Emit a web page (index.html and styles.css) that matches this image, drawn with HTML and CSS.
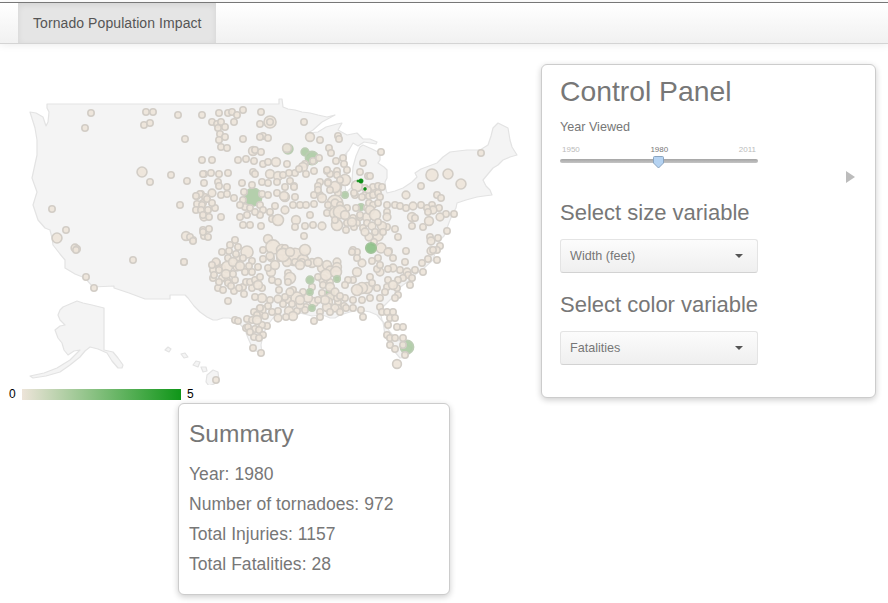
FILE: index.html
```html
<!DOCTYPE html>
<html lang="en">
<head>
<meta charset="utf-8">
<title>Tornado Population Impact</title>
<link rel="stylesheet" href="styles.css">
</head>
<body>
<nav class="navbar">
  <a class="tab">Tornado Population Impact</a>
</nav>
<main class="main">
  <section class="left">
    <svg class="map" viewBox="0 44 530 341" width="530" height="341" aria-label="US map of tornadoes">
      <g class="land">
        <path d="M47 104L279 104L279 99L282 99L283 107L288 109L295 110L302 112L310 113L318 115L327 117L335 115L322 122L313 130L308 133L318 132L326 127L337 124L342 123L338 130L347 135L357 133L363 139L370 139L377 142L376 144L364 142L358 146L353 143L349 150L343 157L347 152L345 165L344 176L346 193L352 187L352 180L353 167L356 156L360 147L363 145L372 149L380 153L380 160L378 163L384 167L387 170L387 178L385 182L386 190L387 193L395 191L403 188L412 182L417 177L415 173L421 169L437 163L443 157L450 152L458 151L467 150L480 150L488 145L491 136L493 128L498 123L508 128L510 140L512 147L517 155L510 157L503 160L498 165L493 168L488 174L483 180L486 186L490 190L492 195L484 196L477 197L466 200L457 203L456 208L453 213L450 220L447 228L444 236L440 240L436 250L433 260L424 268L416 274L410 280L403 285L397 290L392 298L386 304L380 310L382 320L390 332L397 340L405 343L412 348L410 353L407 357L400 358L395 352L390 344L385 337L384 328L383 322L377 315L370 312L360 310L350 312L340 315L335 318L330 318L323 315L312 316L300 313L288 314L278 316L273 318L267 326L263 335L261 345L262 353L256 351L252 347L248 338L245 330L240 324L235 320L229 318L223 318L217 320L213 320L207 317L200 312L194 306L188 298L185 295L170 295L170 299L145 299L129 293L114 288L114 286L93 287L85 278L75 274L65 268L65 260L60 254L53 245L52 238L50 230L45 228L38 220L33 205L37 192L32 178L37 155L37 140L35 128L30 112L36 113L43 117L46 126L48 122L49 112L47 108Z"/>
        <path d="M77 301L83 303L92 305L104 308L104 350L113 352L118 358L123 365L122 368L118 368L112 361L107 353L98 349L90 347L85 351L80 357L70 365L60 372L46 376L33 378L30 376L44 373L57 368L70 360L78 352L80 350L74 351L68 355L64 350L62 343L58 338L55 330L60 326L65 325L60 320L58 315L60 310L63 307Z"/>
        <path d="M207 375L213 370L218 372L219 380L214 384L209 386L206 382Z"/>
        <path d="M196 361L200 362L198 367L193 365Z"/>
        <path d="M201 367L206 367L207 371L203 372Z"/>
        <path d="M181 354L185 353L188 357L184 358Z"/>
        <path d="M165 350L168 347L171 349L169 352Z"/>
      </g>
      <g id="bubbles"></g>
    </svg>
    <div class="legend">
      <span class="legend-num">0</span>
      <span class="legend-bar"></span>
      <span class="legend-num">5</span>
    </div>
    <section class="card summary">
      <h3 class="summary-title">Summary</h3>
      <p class="stat">Year: 1980</p>
      <p class="stat">Number of tornadoes: 972</p>
      <p class="stat">Total Injuries: 1157</p>
      <p class="stat">Total Fatalities: 28</p>
    </section>
  </section>
  <section class="card panel">
    <h2 class="panel-title">Control Panel</h2>
    <div class="field-label">Year Viewed</div>
    <div class="slider">
      <div class="ticks"><span>1950</span><span class="tick-now">1980</span><span>2011</span></div>
      <div class="track">
        <svg class="thumb" width="13" height="13" viewBox="0 0 13 13"><path d="M1.5 1.5Q1.5 .5 2.5 .5L10.500 .5Q11.500 .5 11.500 1.500L11.500 7L6.500 12L1.500 7Z" fill="#b5d3f2" stroke="#8aa4bf"/></svg>
      </div>
    </div>
    <div class="play-row">
      <svg width="9" height="12" viewBox="0 0 9 12"><path d="M0 0L9 6L0 12Z" fill="#bcbcbc"/></svg>
    </div>
    <h4 class="select-title first">Select size variable</h4>
    <div class="select"><span>Width (feet)</span><i class="caret"></i></div>
    <h4 class="select-title">Select color variable</h4>
    <div class="select"><span>Fatalities</span><i class="caret"></i></div>
  </section>
</main>
<script src="map.js"></script>
</body>
</html>
```
FILE: styles.css
```css
* { box-sizing: border-box; }
html, body { margin: 0; padding: 0; }
body {
  width: 888px;
  height: 603px;
  overflow: hidden;
  background: #fff;
  font-family: "Liberation Sans", Arial, sans-serif;
  color: #777;
}
.navbar {
  height: 42px;
  margin-top: 2px;
  padding-left: 18px;
  display: flex;
  background: linear-gradient(#fff, #f1f1f1);
  border-top: 1px solid #777;
  border-bottom: 1px solid #d4d4d4;
  box-shadow: 0 1px 8px rgba(0, 0, 0, .08);
}
.tab {
  width: 198px;
  padding-left: 15px;
  line-height: 40px;
  font-size: 14px;
  letter-spacing: .08px;
  color: #555;
  background: #e5e5e5;
  box-shadow: inset 0 2px 6px rgba(0, 0, 0, .08);
}
.main { display: flex; align-items: flex-start; }
.left { width: 541px; flex: none; }
.map { display: block; }
.land path {
  fill: #f4f4f4;
  stroke: #e3e3e3;
  stroke-width: 1.2;
  stroke-linejoin: round;
}
.legend {
  display: flex;
  align-items: center;
  height: 12px;
  margin-top: 3px;
  padding-left: 9px;
  font-size: 12px;
  color: #000;
}
.legend-num { width: 7px; }
.legend-bar {
  width: 159px;
  height: 11px;
  margin: 0 6px;
  background: linear-gradient(to right, #ede4d9, #0f9618);
}
.card {
  background: #fff;
  border: 1px solid #ccc;
  border-radius: 6px;
  box-shadow: 0 2px 6px rgba(0, 0, 0, .2);
}
.summary {
  width: 272px;
  height: 192px;
  margin: 3px 0 0 178px;
  padding: 15px 10px 0;
}
.summary-title {
  margin: 0 0 11px;
  font-size: 24.5px;
  font-weight: 400;
  line-height: 29px;
}
.stat {
  margin: 0;
  font-size: 17.5px;
  letter-spacing: .05px;
  line-height: 30px;
}
.panel {
  width: 335px;
  height: 334px;
  margin-top: 20px;
  padding: 9px 18px 0;
}
.panel-title {
  margin: 0;
  font-size: 28.3px;
  font-weight: 400;
  line-height: 34px;
}
.field-label {
  margin-top: 10px;
  font-size: 12.600px;
  line-height: 18px;
}
.slider { width: 198px; margin-top: 9px; }
.ticks {
  display: flex;
  justify-content: space-between;
  padding: 0 2px;
  font-size: 8px;
  line-height: 10px;
  color: #bbb;
}
.tick-now { color: #777; }
.track {
  position: relative;
  height: 4px;
  margin-top: 4px;
  background: linear-gradient(#a5a5a5, #c4c4c4);
  border-radius: 2px;
}
.thumb { position: absolute; left: 92px; top: -3px; }
.play-row {
  display: flex;
  justify-content: flex-end;
  height: 12px;
  margin-top: 8px;
  padding-right: 2px;
}
.select-title {
  margin: 0 0 13px;
  font-size: 22px;
  font-weight: 400;
  line-height: 26px;
}
.select-title.first { margin-top: 17px; }
.select {
  display: flex;
  align-items: center;
  justify-content: space-between;
  width: 198px;
  height: 34px;
  margin-bottom: 19px;
  padding: 0 14px 0 9px;
  font-size: 12.600px;
  color: #777;
  background: linear-gradient(#fcfcfc, #efefef);
  border: 1px solid #e4e4e4;
  border-bottom-color: #d2d2d2;
  border-radius: 3px;
}
.caret {
  width: 0;
  height: 0;
  border-left: 4px solid transparent;
  border-right: 4px solid transparent;
  border-top: 4px solid #555;
}
#bubbles circle {
  fill: #ede4d9;
  fill-opacity: .92;
  stroke: #d2cdc6;
  stroke-width: 1.6;
}
#bubbles circle.g1 { fill: #aecba5; stroke: #bccdb4; }
#bubbles circle.g2 { fill: #8cc087; stroke: #a2c39a; }
#bubbles circle.g3 { fill: #0f8f1a; stroke: #0f8f1a; stroke-width: .6; fill-opacity: 1; }
```
FILE: map.js
```js
var base = [
[91,113],[85,128],[146,112],[153,112],[144,125],[150,123],[178,115],[202,115],[185,139],[142,172,4.500],[171,175],[150,182],[187,181],[202,160],[204,174],[204,183],[180,205],[52,209],[197,196],[201,194],[205,197],[203,203],[197,204],[202,205],[196,210],[201,210],[204,217,3.500],[66,230],[57,238,4.500],[75,248,3.500],[77,249],[76,250],[86,277],[94,288],[133,260],[184,262],[186,236,4],[193,240],[203,230],[204,236],[209,229],
[212,122],[219,113],[228,113],[232,112],[237,115],[243,110],[261,112],[217,124],[221,122],[234,122],[218,128],[225,127],[260,124],[270,122,5.500],[270,122,3],[304,122],[220,134],[225,137],[219,140],[243,139],[263,136],[260,137],[268,138],[310,137,4],[320,140],[338,136],[339,139],[221,147],[227,148],[253,151,4],[255,150],[261,152],[287,148,4],[329,148],[331,153],[313,161],[319,158],[212,160],[238,160],[246,159],[254,161],[263,164],[268,162],[276,162,4],[287,164],[305,164],[336,161],[343,158],[344,164],[363,163],[303,167,4],[295,173],[299,169],[289,173],[314,171],[327,171],[337,171],[203,174],[211,173],[219,174],[228,173],[253,172],[255,174],[270,174,4],[278,176,4],[283,175],[306,174],[330,174],[337,175],[360,172],[368,176],[218,182],[219,186],[227,187],[242,183],[252,185],[262,182],[268,183],[277,182],[285,187],[290,181],[294,186],[320,182],[328,182],[318,186],[336,187,5],[357,186,5],[365,188],[212,193,3.500],[200,194],[196,196],[221,195],[227,194],[244,192],[262,194],[268,195],[277,193],[285,197,4],[295,197],[314,195],[320,195],[338,193],[365,195],[355,195],[234,198],[207,199],[243,200],[245,207],[260,205],[263,210],[293,205],[300,205],[306,205],[314,204],[335,203,7],[335,203,3.500],[328,205],[340,205],[347,208],[356,208],[367,208],[203,215],[209,217],[221,217],[240,217],[247,215],[260,215],[272,219],[278,220,5],[296,220,4],[327,213],[335,213,5],[338,216],[353,218],[360,217],[367,217,4],[243,225],[250,225],[261,226],[295,227],[305,226],[313,225],[322,226,3.500],[337,225,5],[347,223],[357,223],[367,223],
[381,152],[370,176],[335,187,5],[327,170],[328,183],[318,190],[432,175,5.500],[448,174,4.500],[461,184,4.500],[421,186],[481,153],[406,195,3.500],[437,195],[441,198],[373,187],[378,186],[382,187],[284,196,4],[294,187],[354,193],[362,197],[369,196],[373,195],[378,193],[380,197],[369,203],[373,205],[378,203],[387,205],[395,205],[400,206],[406,208],[413,206,3.500],[421,205],[432,205],[439,208],[433,210,3.500],[427,208],[428,212],[387,212],[387,217,3.500],[412,217,4],[415,218],[446,214],[454,214],[440,217,3.500],[429,221,4],[412,226],[423,227],[395,229],[447,231],[387,227],[382,226,4],[372,226,3.500],[363,228],[354,227],[346,230],[304,236],[369,237,3.500],[378,236,4.500],[374,242],[381,248,4.500],[389,251],[398,237],[406,251],[430,237],[431,241,3.500],[438,238],[440,246],[431,251,3.500],[437,250],[293,255,5],[303,257,4],[353,250],[357,252],
[184,262],[228,301],[190,237],[193,241],[203,232],[208,237],[235,240],[230,245],[222,252],[229,251],[238,247],[247,252,5.500],[268,239,4],[273,247,6.500],[282,250,5],[285,248],[295,257,8],[303,260,5],[312,263,4],[213,270],[217,263],[222,268],[227,267,5],[237,258],[243,258],[252,261],[263,259],[271,258],[280,258],[287,262,4],[295,262],[302,262],[308,263],[322,268,4],[337,262,3.500],[337,267,4],[352,252],[362,263,3.500],[357,258],[372,261],[378,258],[388,252,3.500],[428,259],[433,250],[437,260],[405,262],[423,272],[422,263],[415,270],[407,272,3.500],[408,275],[403,278],[412,278],[393,268,3.500],[388,269],[380,272,3.500],[377,269],[357,272,4],[353,280],[348,280],[367,288,5],[362,288,5],[370,277],[377,288],[387,287],[397,288],[398,295],[395,298],[380,298],[370,298],[353,300],[362,300],[345,298],[338,302],[344,306],[353,308],[361,310],[363,317],[380,307],[382,312],[387,312],[393,312],[390,318],[395,318],[388,325],[397,327],[403,327],[387,335],[390,338],[395,338],[403,338],[390,345],[395,349],[403,345],[405,355],[397,364,4],
[271,272,4],[272,280],[278,282],[288,273],[290,278,5],[288,282],[323,279,4],[330,282],[318,277],[337,278],[312,287],[303,292],[293,290],[323,285],[322,293],[330,297,3.500],[297,298,5.500],[288,300],[285,297],[278,299,3.500],[279,290],[262,298,4],[255,297],[262,288],[252,288],[243,287],[246,282],[250,282],[255,280],[260,277],[252,272],[245,272],[237,267,3.500],[235,280],[227,280],[222,278],[218,288],[223,290],[234,291],[228,283],[314,302,4],[328,302,4],[327,307,4],[320,312],[306,307],[305,310],[297,311],[289,311,4],[293,316,4],[286,317],[278,318,3.500],[278,311],[268,306],[261,310,4.500],[260,308],[254,312],[247,319],[252,320],[260,315],[257,315],[267,326],[262,325],[246,328],[248,327],[255,329],[259,330],[263,335],[254,337],[259,338],[253,348],[261,353],[235,320],[238,321],[216,380],[314,321],[320,317],[338,308],[346,308],[337,298],
[216,262,3.500],[213,278],[219,270],[228,258],[233,262,4],[240,266,4],[226,274,4],[233,274],[219,282],[212,265],[239,288],[244,294],[214,275],[231,286],[236,254],[249,266],[258,267],[258,285,4],[268,268],[275,265,4],[283,255,6],[290,252,4],[300,265,4],[305,250,5],[270,256,3.500],[263,250],[318,262,4],[327,265,4],[330,270,3.500],[326,275,5],[336,272,5],[345,285],[330,287,4],[335,292,3.500],[340,296],[325,300,4],[335,308,3.500],[330,312],[340,312],[318,300],[308,298,4],[300,305,3.500],[292,304],[283,304],[270,300],[272,312],[265,316],[257,320,4],[250,332],[300,300,4],[290,292,3.500],[345,180,5],[347,170],[340,180],[330,190],[322,198,4],[340,212,6],[335,220],[345,215,4],[370,210,4],[375,215,5],[378,222],[368,190],[360,215],[352,222,4],[365,232,3.500],[375,232],[383,232],[310,215],[285,210,3.500],[275,206],[270,212],[250,208],[255,212],[240,205],[215,208],[208,210],[212,203],[380,265],[393,258],[400,270],[398,280],[410,285],[388,280],[393,285,4],[385,292],[372,283],[357,290,5]
];
var under = [[288,149,4.500],[305,152,3.500],[312,158,6],[345,195],[361,207],[253,197,8],[407,347,6],[330,293,4]];
var over = [[310,280,3.500],[337,279,2.800],[310,292,2.800],[312,308,2.800]];
var strong = [[371,248,4.800]];
var dark = [[361,181,2],[358,181,1],[365,189,1.300]];
var ns = "http://www.w3.org/2000/svg";
var layer = document.getElementById("bubbles");
function draw(list, cls) {
  list.forEach(function (b) {
    var c = document.createElementNS(ns, "circle");
    c.setAttribute("cx", b[0]);
    c.setAttribute("cy", b[1]);
    c.setAttribute("r", b[2] ? b[2] * 1.1 : 3.2);
    if (cls) c.setAttribute("class", cls);
    layer.appendChild(c);
  });
}
draw(under, "g1");
draw(base, "");
draw(over, "g1");
draw(strong, "g2");
draw(dark, "g3");
```
